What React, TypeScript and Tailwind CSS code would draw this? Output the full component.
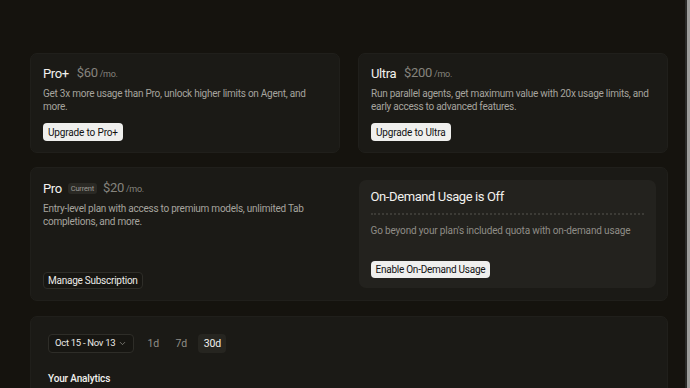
import { ChevronDown } from "lucide-react";

type Plan = {
  name: string;
  price: string;
  desc: string;
  cta: string;
};

const upgrades: Plan[] = [
  {
    name: "Pro+",
    price: "$60",
    desc: "Get 3x more usage than Pro, unlock higher limits on Agent, and more.",
    cta: "Upgrade to Pro+",
  },
  {
    name: "Ultra",
    price: "$200",
    desc: "Run parallel agents, get maximum value with 20x usage limits, and early access to advanced features.",
    cta: "Upgrade to Ultra",
  },
];

function PlanHeader({ name, price, current }: { name: string; price: string; current?: boolean }) {
  return (
    <div className="flex items-center gap-[8px] leading-[16px]">
      <span className="text-[13px] tracking-[-0.4px] text-[#f2f1ee]">{name}</span>
      {current && (
        <span className="-mx-[2px] rounded-[3px] bg-[#2a2924] px-[3px] text-[7.5px] leading-[11px] tracking-[-0.2px] text-[#9a9892]">
          Current
        </span>
      )}
      <span className="text-[13px] tracking-[-0.3px] text-[#85837d]">
        {price}
        <span className="ml-[2px] text-[9px]">/mo.</span>
      </span>
    </div>
  );
}

export default function App() {
  return (
    <div
      className="flex h-screen overflow-hidden bg-[#15130e] tracking-[-0.15px]"
      style={{ fontFamily: "Roboto, 'Liberation Sans', sans-serif" }}
    >
      <main className="flex-1 pl-[30px] pr-[17px] pt-[53px]">
        <div className="grid grid-cols-2 gap-[18px]">
          {upgrades.map((p) => (
            <div
              key={p.name}
              className="flex flex-col rounded-[7px] border border-[#201f1b] bg-[#1b1a16] px-[12px] pb-[11px] pt-[11px]"
            >
              <PlanHeader name={p.name} price={p.price} />
              <p className="mt-[5px] pr-[3px] text-[10px] leading-[13px] tracking-[-0.25px] text-[#a6a49e]">{p.desc}</p>
              <div className="mt-[10px] flex">
                <button className="h-[18px] rounded-[4px] bg-[#efefed] px-[5px] text-[10px] text-[#111]">
                  {p.cta}
                </button>
              </div>
            </div>
          ))}
        </div>

        <div className="mt-[14px] grid grid-cols-2 gap-[18px] rounded-[7px] border border-[#201f1b] bg-[#1b1a16] py-[12px] pl-[12px] pr-[11px]">
          <div className="flex flex-col">
            <PlanHeader name="Pro" price="$20" current />
            <p className="mt-[5px] text-[10px] leading-[13px] tracking-[-0.25px] text-[#a6a49e]">
              Entry-level plan with access to premium models, unlimited Tab completions, and more.
            </p>
            <div className="-mb-px mt-auto flex">
              <button className="h-[17px] rounded-[4px] border border-[#2e2d28] bg-[#171612] px-[4px] text-[10px] tracking-[-0.25px] text-[#ecebe8]">
                Manage Subscription
              </button>
            </div>
          </div>
          <div className="flex h-[108px] flex-col rounded-[7px] bg-[#23221e] px-[12px] pb-[10px] pt-[8px]">
            <h3 className="text-[13px] leading-[18px] tracking-[-0.4px] text-[#f2f1ee]">On-Demand Usage is Off</h3>
            <div className="mt-[7px] border-t-2 border-dotted border-[#3c3b36]" />
            <p className="mt-[9px] text-[10px] leading-[13px] text-[#8f8d87]">
              Go beyond your plan's included quota with on-demand usage
            </p>
            <div className="mt-auto flex">
              <button className="h-[17px] rounded-[4px] bg-[#efefed] px-[5px] text-[10px] tracking-[-0.25px] text-[#111]">
                Enable On-Demand Usage
              </button>
            </div>
          </div>
        </div>

        <div className="mt-[15px] h-[200px] rounded-[7px] border border-[#201f1b] bg-[#1b1a16] px-[17px] pt-[17px]">
          <div className="flex items-center">
            <button className="flex h-[19px] items-center gap-[3px] rounded-[4px] border border-[#2e2d28] bg-[#171612] px-[6px] text-[9.5px] tracking-[-0.3px] text-[#ecebe8]">
              Oct 15 - Nov 13
              <ChevronDown className="h-[9px] w-[9px] text-[#8f8d87]" />
            </button>
            <span className="ml-[5px] w-[28px] text-center text-[10.5px] text-[#8f8d87]">1d</span>
            <span className="w-[28px] text-center text-[10.5px] text-[#8f8d87]">7d</span>
            <span className="ml-[3px] flex h-[19px] w-[28px] items-center justify-center rounded-[4px] bg-[#262520] text-[10.5px] text-[#f2f1ee]">
              30d
            </span>
          </div>
          <h4 className="mt-[19px] text-[10px] font-medium leading-[13px] text-[#f2f1ee]">Your Analytics</h4>
        </div>
      </main>
      <div className="flex w-[5px]">
        <div className="w-[2px] bg-[#2a2a28]" />
        <div className="w-[3px] bg-[#9e9e9c]" />
      </div>
    </div>
  );
}
